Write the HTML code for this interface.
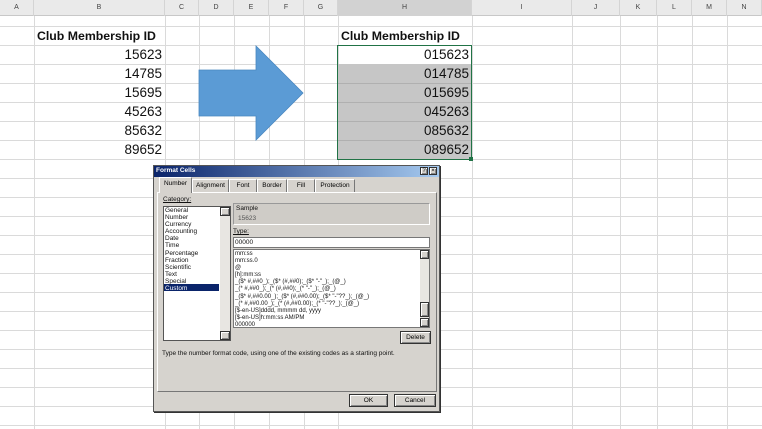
<!DOCTYPE html>
<html><head><style>
*{margin:0;padding:0;box-sizing:border-box}
body{width:762px;height:429px;overflow:hidden;background:#fff;position:relative;font-family:"Liberation Sans",sans-serif}
.a{position:absolute}
.hdr{position:absolute;top:0;height:16px;background:#eaeaea;border-bottom:1px solid #c8c8c8;width:762px}
.ch{position:absolute;top:0;height:16px;font-size:7px;color:#444;text-align:center;line-height:16px;border-right:1px solid #d4d4d4}
.vl{position:absolute;top:16px;bottom:0;width:1px;background:#dadada}
.hl{position:absolute;left:0;right:0;height:1px;background:#dadada}
.cell{position:absolute;font-family:"Liberation Sans",sans-serif;font-size:13.5px;color:#111;text-align:right;white-space:nowrap}
.t{position:absolute;font-size:6.5px;color:#111;white-space:nowrap;font-family:"Liberation Sans",sans-serif}
.tab{position:absolute;top:179px;height:13px;border:1px solid #fff;border-right-color:#777;border-bottom:none;font-size:6.5px;text-align:center;line-height:12px;background:#d6d3ce}
.btn{position:absolute;background:#d6d3ce;border:1px solid #333;box-shadow:inset 1px 1px #fff,inset -1px -1px #888;font-size:6.5px;text-align:center}
</style></head><body>
<div class="hdr"></div>
<div class="ch" style="left:0;width:34px">A</div>
<div class="ch" style="left:34px;width:131px">B</div>
<div class="ch" style="left:165px;width:34px">C</div>
<div class="ch" style="left:199px;width:35px">D</div>
<div class="ch" style="left:234px;width:35px">E</div>
<div class="ch" style="left:269px;width:35px">F</div>
<div class="ch" style="left:304px;width:34px">G</div>
<div class="ch" style="left:338px;width:134px;background:#d2d2d2">H</div>
<div class="ch" style="left:472px;width:100px">I</div>
<div class="ch" style="left:572px;width:48px">J</div>
<div class="ch" style="left:620px;width:37px">K</div>
<div class="ch" style="left:657px;width:35px">L</div>
<div class="ch" style="left:692px;width:35px">M</div>
<div class="ch" style="left:727px;width:35px">N</div>
<div class="vl" style="left:34px"></div><div class="vl" style="left:165px"></div><div class="vl" style="left:199px"></div><div class="vl" style="left:234px"></div><div class="vl" style="left:269px"></div><div class="vl" style="left:304px"></div><div class="vl" style="left:338px"></div><div class="vl" style="left:472px"></div><div class="vl" style="left:572px"></div><div class="vl" style="left:620px"></div><div class="vl" style="left:657px"></div><div class="vl" style="left:692px"></div><div class="vl" style="left:727px"></div>
<div class="hl" style="top:26px"></div><div class="hl" style="top:45px"></div><div class="hl" style="top:64px"></div><div class="hl" style="top:83px"></div><div class="hl" style="top:102px"></div><div class="hl" style="top:121px"></div><div class="hl" style="top:140px"></div><div class="hl" style="top:159px"></div><div class="hl" style="top:178px"></div><div class="hl" style="top:197px"></div><div class="hl" style="top:216px"></div><div class="hl" style="top:235px"></div><div class="hl" style="top:254px"></div><div class="hl" style="top:273px"></div><div class="hl" style="top:292px"></div><div class="hl" style="top:311px"></div><div class="hl" style="top:330px"></div><div class="hl" style="top:349px"></div><div class="hl" style="top:368px"></div><div class="hl" style="top:387px"></div><div class="hl" style="top:406px"></div><div class="hl" style="top:425px"></div>
<div class="a" style="left:338px;top:64px;width:134px;height:95px;background:#c6c6c6"></div>
<div class="hl" style="top:83px;left:338px;right:290px;background:#b0b0b0"></div><div class="hl" style="top:102px;left:338px;right:290px;background:#b0b0b0"></div><div class="hl" style="top:121px;left:338px;right:290px;background:#b0b0b0"></div><div class="hl" style="top:140px;left:338px;right:290px;background:#b0b0b0"></div>
<div class="a" style="left:337px;top:45px;width:135px;height:115px;border:1px solid #217346"></div>
<div class="a" style="left:469px;top:157px;width:4px;height:4px;background:#217346"></div>
<div class="cell" style="left:37px;top:29px;font-weight:bold;text-align:left;font-size:12.3px">Club Membership ID</div>
<div class="cell" style="left:341px;top:29px;font-weight:bold;text-align:left;font-size:12.3px">Club Membership ID</div>
<div class="cell" style="left:34px;width:128px;top:47px">15623</div>
<div class="cell" style="left:34px;width:128px;top:66px">14785</div>
<div class="cell" style="left:34px;width:128px;top:85px">15695</div>
<div class="cell" style="left:34px;width:128px;top:104px">45263</div>
<div class="cell" style="left:34px;width:128px;top:123px">85632</div>
<div class="cell" style="left:34px;width:128px;top:142px">89652</div>
<div class="cell" style="left:338px;width:131px;top:47px">015623</div>
<div class="cell" style="left:338px;width:131px;top:66px">014785</div>
<div class="cell" style="left:338px;width:131px;top:85px">015695</div>
<div class="cell" style="left:338px;width:131px;top:104px">045263</div>
<div class="cell" style="left:338px;width:131px;top:123px">085632</div>
<div class="cell" style="left:338px;width:131px;top:142px">089652</div>
<svg class="a" style="left:0;top:0" width="762" height="429"><polygon points="199,70 256,70 256,46 303,93 256,140 256,116 199,116" fill="#5b9bd5" stroke="#4a88c0" stroke-width="0.8"/></svg>
<div class="a" style="left:153px;top:165px;width:287px;height:247px;background:#d6d3ce;border:1px solid #555;box-shadow:1px 1px #333"></div>
<div class="a" style="left:154px;top:166px;width:285px;height:11px;background:linear-gradient(90deg,#0a246a,#a6caf0)"></div>
<div class="t" style="left:156px;top:167px;color:#fff;font-weight:bold;font-size:6.5px">Format Cells</div>
<div class="btn" style="left:420px;top:167px;width:8px;height:8px;font-size:6px;line-height:6px">?</div>
<div class="btn" style="left:429px;top:167px;width:8px;height:8px;font-size:6px;line-height:6px">×</div>
<div class="a" style="left:157px;top:192px;width:280px;height:200px;border:1px solid #fff;border-right-color:#777;border-bottom-color:#777"></div>
<div class="tab" style="left:159px;top:177px;height:16px;width:33px;background:#d6d3ce;z-index:2">Number</div>
<div class="tab" style="left:192px;width:37px">Alignment</div>
<div class="tab" style="left:229px;width:28px">Font</div>
<div class="tab" style="left:257px;width:30px">Border</div>
<div class="tab" style="left:287px;width:28px">Fill</div>
<div class="tab" style="left:315px;width:40px">Protection</div>
<div class="t" style="left:163px;top:196px;text-decoration:underline">Category:</div>
<div class="a" style="left:163px;top:206px;width:68px;height:135px;background:#fff;border:1px solid #555"></div>
<div class="a" style="left:220px;top:207px;width:10px;height:133px;background:#e8e6e2"></div>
<div class="btn" style="left:220px;top:207px;width:10px;height:9px"></div>
<div class="btn" style="left:220px;top:331px;width:10px;height:9px"></div>
<div class="a" style="left:164px;top:284px;width:55px;height:7px;background:#0a246a"></div>
<div class="t" style="left:165px;top:207px;line-height:7.1px">General<br>Number<br>Currency<br>Accounting<br>Date<br>Time<br>Percentage<br>Fraction<br>Scientific<br>Text<br>Special<br><span style="color:#fff">Custom</span></div>
<div class="a" style="left:233px;top:203px;width:197px;height:22px;border:1px solid #999;border-right-color:#fff;border-bottom-color:#fff;background:#cfccc7"></div>
<div class="t" style="left:236px;top:205px">Sample</div>
<div class="t" style="left:238px;top:215px;color:#555">15623</div>
<div class="t" style="left:233px;top:228px;text-decoration:underline">Type:</div>
<div class="a" style="left:233px;top:237px;width:197px;height:11px;background:#fff;border:1px solid #777"></div>
<div class="t" style="left:235px;top:239px">00000</div>
<div class="a" style="left:233px;top:249px;width:197px;height:79px;background:#fff;border:1px solid #777"></div>
<div class="a" style="left:420px;top:250px;width:9px;height:77px;background:#e8e6e2"></div>
<div class="btn" style="left:420px;top:250px;width:9px;height:9px"></div>
<div class="btn" style="left:420px;top:302px;width:9px;height:15px"></div>
<div class="btn" style="left:420px;top:318px;width:9px;height:9px"></div>
<div class="t" style="left:235px;top:251px;line-height:7.1px;font-size:6px">mm:ss<br>mm:ss.0<br>@<br>[h]:mm:ss<br>_($* #,##0_);_($* (#,##0);_($* "-"_);_(@_)<br>_(* #,##0_);_(* (#,##0);_(* "-"_);_(@_)<br>_($* #,##0.00_);_($* (#,##0.00);_($* "-"??_);_(@_)<br>_(* #,##0.00_);_(* (#,##0.00);_(* "-"??_);_(@_)<br>[$-en-US]dddd, mmmm dd, yyyy<br>[$-en-US]h:mm:ss AM/PM<br>000000</div>
<div class="btn" style="left:400px;top:331px;width:31px;height:13px;line-height:11px">Delete</div>
<div class="t" style="left:162px;top:350px">Type the number format code, using one of the existing codes as a starting point.</div>
<div class="btn" style="left:349px;top:394px;width:39px;height:13px;line-height:11px">OK</div>
<div class="btn" style="left:394px;top:394px;width:42px;height:13px;line-height:11px">Cancel</div>
</body></html>
